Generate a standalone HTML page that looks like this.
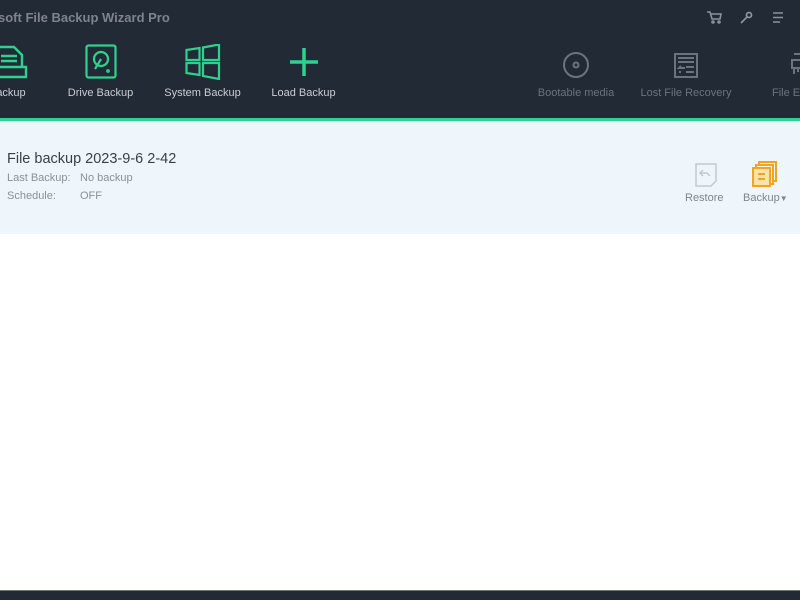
<!DOCTYPE html>
<html><head><meta charset="utf-8"><style>
*{margin:0;padding:0;box-sizing:border-box}
body{width:800px;height:600px;overflow:hidden;background:#fff;font-family:"Liberation Sans",Arial,sans-serif;position:relative}
.top{position:absolute;left:0;top:0;width:800px;height:118px;background:#222a35}
.gl{position:absolute;left:0;top:118px;width:800px;height:3px;background:#2fd18f}
.title{position:absolute;left:-2px;top:10px;color:#7d848e;font-size:13px;font-weight:bold}
.btn{position:absolute;top:44px;text-align:center;font-size:11px;color:#c9ced4}
.btn svg{display:block;margin:0 auto 7px}
.dim{color:#6b737d}
.panel{position:absolute;left:0;top:121px;width:800px;height:113px;background:#eef6fc}
.name{position:absolute;left:7px;top:151px;font-size:14.5px;color:#3a3f45}
.lbl{position:absolute;font-size:11px;color:#8a9098}
.foot{position:absolute;left:0;top:590px;width:800px;height:10px;background:#212a35;border-top:1px solid #777}
</style></head><body>
<div class="top"></div><div class="gl"></div>
<div class="title">soft File Backup Wizard Pro</div>
<svg style="position:absolute;left:706px;top:11px" width="16" height="13" viewBox="0 0 16 13" fill="none" stroke="#8a929c" stroke-width="1.6"><path d="M1 1h3l2 7h8l1-5H5"/><circle cx="7" cy="11" r="1"/><circle cx="13" cy="11" r="1"/></svg>
<svg style="position:absolute;left:740px;top:11px" width="13" height="13" viewBox="0 0 13 13" fill="none" stroke="#8a929c" stroke-width="1.8"><circle cx="9" cy="4" r="2.5"/><path d="M7 6L1 12"/></svg>
<svg style="position:absolute;left:772px;top:12px" width="12" height="11" viewBox="0 0 12 11" stroke="#8a929c" stroke-width="1.6"><path d="M1 1h10M1 5.5h10M1 10h7"/></svg>
<div class="btn" style="left:-12px;width:50px"><svg width="32" height="36" viewBox="0 0 32 36" fill="none" stroke="#2fd18f" stroke-width="2.4"><path d="M1 3h16l8 8v12H1zM4 12h16M4 17h16M1 23h28v10H1z"/></svg><span style="margin-left:-4px">ackup</span></div>
<div class="btn" style="left:63px;width:75px"><svg width="32" height="36" viewBox="0 0 32 36" fill="none" stroke="#2fd18f" stroke-width="2.2"><rect x="1.5" y="1.5" width="29" height="32" rx="2"/><circle cx="16" cy="15" r="7"/><path d="M16 15l-6 10"/><circle cx="23" cy="27" r="0.8"/></svg>Drive Backup</div>
<div class="btn" style="left:160px;width:85px"><svg width="36" height="36" viewBox="0 0 36 36" fill="none" stroke="#2fd18f" stroke-width="2.2"><path d="M1.5 6l13-2v12h-13zM18 3.5l16-3v15.5H18zM1.5 19h13v12l-13-2zM18 19h16v16l-16-3z"/></svg>System Backup</div>
<div class="btn" style="left:265px;width:77px"><svg width="36" height="36" viewBox="0 0 36 36" stroke="#2fd18f" stroke-width="3.5"><path d="M18 4v28M4 18h28"/></svg>Load Backup</div>
<div class="btn dim" style="left:530px;width:92px"><svg width="36" height="36" viewBox="0 0 36 36" fill="none" stroke="#6b737d" stroke-width="2"><circle cx="18" cy="21" r="12"/><circle cx="18" cy="21" r="2.5"/></svg>Bootable media</div>
<div class="btn dim" style="left:636px;width:100px"><svg width="28" height="36" viewBox="0 0 28 36" fill="none" stroke="#6b737d" stroke-width="2"><path d="M3 10h22v23H3zM6 14h16M6 18h16M14 23h8M14 28h8M13 24H7l2-2M7 28h2"/></svg>Lost File Recovery</div>
<div class="btn dim" style="left:766px;width:60px;text-align:left;padding-left:6px"><svg width="28" height="36" viewBox="0 0 28 36" fill="none" stroke="#6b737d" stroke-width="2" style="margin:0 0 7px 14px"><path d="M8 10h16v6M6 16h20v8H6zM8 24v6M12 24v4M16 24v6M20 24v4"/></svg>File E</div>
<div class="panel"></div>
<div class="name">File backup 2023-9-6 2-42</div>
<div class="lbl" style="left:7px;top:172px">Last Backup:</div><div class="lbl" style="left:80px;top:172px">No backup</div>
<div class="lbl" style="left:7px;top:190px">Schedule:</div><div class="lbl" style="left:80px;top:190px">OFF</div>
<svg style="position:absolute;left:695px;top:163px" width="22" height="24" viewBox="0 0 22 24" fill="none" stroke="#c4c9ce" stroke-width="1.5"><path d="M1 1h20v17l-5 5H1z"/><path d="M8 7l-3 3 3 3M5 10h7l3 3"/></svg>
<div class="lbl" style="left:685px;top:192px;color:#7f858c">Restore</div>
<svg style="position:absolute;left:752px;top:161px" width="26" height="26" viewBox="0 0 26 26" fill="none" stroke="#eea520" stroke-width="2"><path d="M7 5V1h17v19h-3"/><path d="M4 8V4h17v19h-3"/><rect x="1" y="7" width="17" height="18" fill="#fbe3a8"/><path d="M6 13h7M6 18h7"/></svg>
<div class="lbl" style="left:743px;top:192px;color:#7f858c">Backup<span style="font-size:8px">▼</span></div>
<div class="foot"></div>
</body></html>
